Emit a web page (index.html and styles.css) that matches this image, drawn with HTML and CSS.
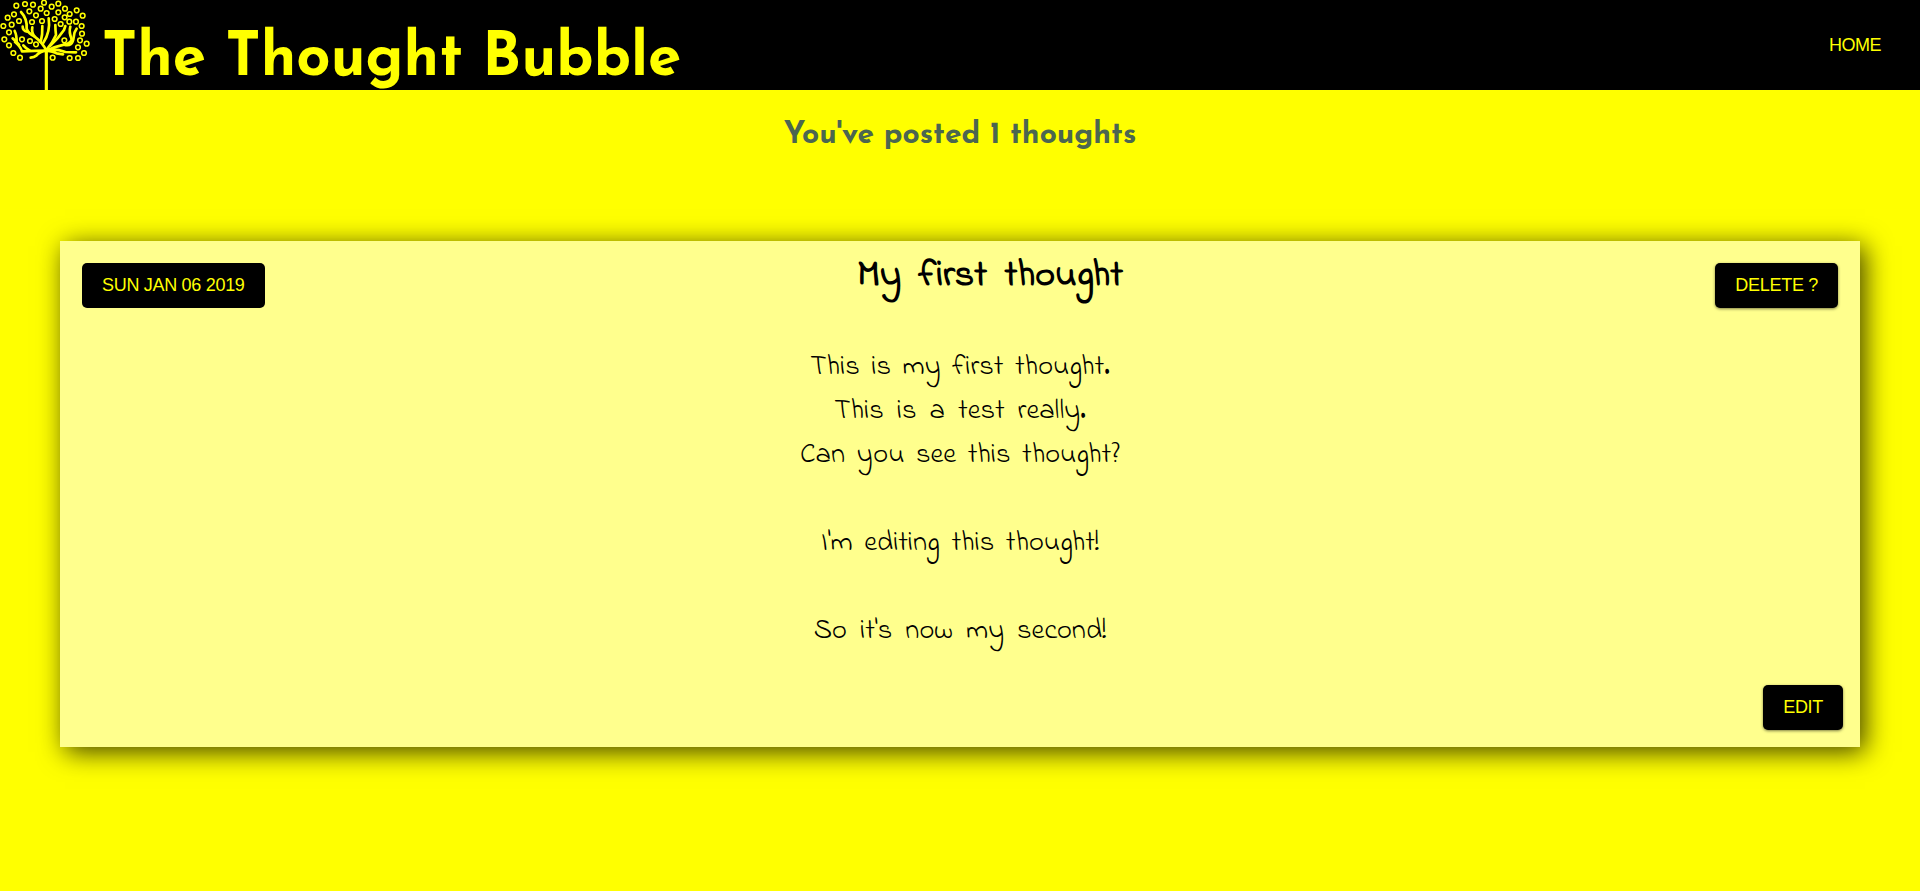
FILE: index.html
```html
<!DOCTYPE html>
<html lang="en">
<head>
<meta charset="utf-8">
<title>The Thought Bubble</title>
<link rel="stylesheet" href="styles.css">
</head>
<body>
<header class="header">
  <div class="brand">
    <svg class="logo" viewBox="0 0 270 270" fill="none" stroke="#ff0" stroke-linecap="round" stroke-linejoin="round">
      <g stroke-width="4.6">
        <circle cx="49" cy="17" r="7"/><circle cx="75" cy="12" r="7"/><circle cx="99" cy="14" r="7"/><circle cx="132" cy="8" r="7"/><circle cx="175" cy="11" r="7"/><circle cx="195" cy="26" r="7"/><circle cx="23" cy="53" r="7"/><circle cx="42" cy="43" r="7"/><circle cx="88" cy="34" r="7"/><circle cx="122" cy="26" r="7"/><circle cx="155" cy="20" r="7"/><circle cx="140" cy="39" r="7"/><circle cx="175" cy="37" r="7"/><circle cx="230" cy="31" r="7"/><circle cx="248" cy="47" r="7"/><circle cx="10" cy="78" r="7"/><circle cx="35" cy="74" r="7"/><circle cx="57" cy="63" r="7"/><circle cx="108" cy="46" r="7"/><circle cx="96" cy="66" r="7"/><circle cx="126" cy="63" r="7"/><circle cx="164" cy="57" r="7"/><circle cx="194" cy="52" r="7"/><circle cx="208" cy="65" r="7"/><circle cx="182" cy="72" r="7"/><circle cx="209" cy="42" r="7"/><circle cx="228" cy="65" r="7"/><circle cx="245" cy="78" r="7"/><circle cx="27" cy="97" r="7"/><circle cx="13" cy="118" r="7"/><circle cx="27" cy="136" r="7"/><circle cx="66" cy="118" r="7"/><circle cx="90" cy="123" r="7"/><circle cx="108" cy="133" r="7"/><circle cx="40" cy="159" r="7"/><circle cx="60" cy="173" r="7"/><circle cx="158" cy="173" r="7"/><circle cx="193" cy="121" r="7"/><circle cx="246" cy="101" r="7"/><circle cx="240" cy="121" r="7"/><circle cx="260" cy="131" r="7"/><circle cx="234" cy="142" r="7"/><circle cx="252" cy="159" r="7"/><circle cx="234" cy="174" r="7"/><circle cx="209" cy="174" r="7"/>
      </g>
      <g stroke-width="8">
        <path d="M139 150V268" stroke-width="9.5"/>
        <path d="M139 152Q128 128 104 110Q84 100 80 86Q82 56 63 36"/>
        <path d="M82 95Q68 92 68 80"/>
        <path d="M104 110Q94 98 97 82"/>
        <path d="M122 126Q128 105 127 78"/>
        <path d="M130 128Q152 95 146 55"/>
        <path d="M139 150Q158 128 168 105Q166 88 166 75"/>
        <path d="M150 138Q176 114 192 90L196 78"/>
        <path d="M139 152Q165 140 192 134Q212 130 215 118Q206 96 211 80"/>
        <path d="M192 134Q218 142 221 112Q222 96 230 86"/>
        <path d="M139 152Q105 152 66 154Q62 140 45 126"/>
        <path d="M57 134Q42 118 38 115M50 126Q50 105 44 93"/>
        <path d="M90 152Q78 146 70 136"/>
        <path d="M139 152Q118 155 110 166Q102 172 92 173"/>
        <path d="M139 152Q160 154 170 160L189 163"/>
        <path d="M139 150Q170 146 196 156L228 157"/>
      </g>
    </svg>
    <h1 class="site-title">The Thought Bubble</h1>
  </div>
  <nav><a class="nav-link">HOME</a></nav>
</header>
<main>
  <h2 class="count">You've posted 1 thoughts</h2>
  <article class="card">
    <div class="card-top">
      <span class="button flat">SUN JAN 06 2019</span>
      <h3 class="card-title">My first thought</h3>
      <button class="button">DELETE ?</button>
    </div>
    <div class="thought">
      <p class="line">This is my first thought.</p>
      <p class="line wide">This is a test really.</p>
      <p class="line">Can you see this thought?</p>
      <p class="line gap">I'm editing this thought!</p>
      <p class="line gap wide">So it's now my second!</p>
    </div>
    <div class="card-bottom"><button class="button">EDIT</button></div>
  </article>
</main>
</body>
</html>
```
FILE: styles.css
```css
* { box-sizing: border-box; }
body { margin: 0; min-height: 100vh; background: #ff0; font-family: "Liberation Sans", Arial, sans-serif; }
h1, h2, h3, p { margin: 0; }
.header { height: 90px; background: #000; color: #ff0; display: flex; justify-content: space-between; align-items: center; padding-right: 39px; }
.brand { display: flex; height: 90px; }
.logo { width: 90px; height: 90px; overflow: visible; }
.site-title { margin-left: 12px; font: 700 60px/60px "Josefin Sans", Lato, sans-serif; padding-top: 30px; height: 90px; white-space: nowrap; }
.nav-link { font-size: 18px; letter-spacing: -0.5px; }
.count { margin-top: 18px; height: 56px; text-align: center; color: #4b6650; font: 700 30px/56px "Josefin Sans", Lato, sans-serif; }
.card { width: 1800px; height: 506px; margin: 77px auto 0; background: #ffff8d; box-shadow: 5px 5px 25px rgba(0, 0, 0, .75); display: flex; flex-direction: column; }
.card-top { display: flex; justify-content: space-between; align-items: flex-start; padding: 22px 22px 0; height: 104px; }
.button { border: 0; border-radius: 5px; background: #000; color: #ff0; height: 45px; padding: 0 20px; font: 18px/45px "Liberation Sans", Arial, sans-serif; letter-spacing: -0.3px; box-shadow: 0 1px 3px rgba(0, 0, 0, .5); white-space: nowrap; }
.flat { box-shadow: none; }
.card-title { font: 700 38px/44px "Indie Flower", Lato, sans-serif; font-variant-ligatures: none; word-spacing: 8px; margin-top: -9px; }
.thought { text-align: center; font: 400 28.5px/44px "Indie Flower", Lato, sans-serif; font-variant-ligatures: none; word-spacing: 4.5px; color: #000; flex: 1; }
.line { height: 44px; }
.wide { word-spacing: 6px; }
.gap { margin-top: 44px; }
.card-bottom { display: flex; justify-content: flex-end; padding: 0 17px 17px 0; }
```
